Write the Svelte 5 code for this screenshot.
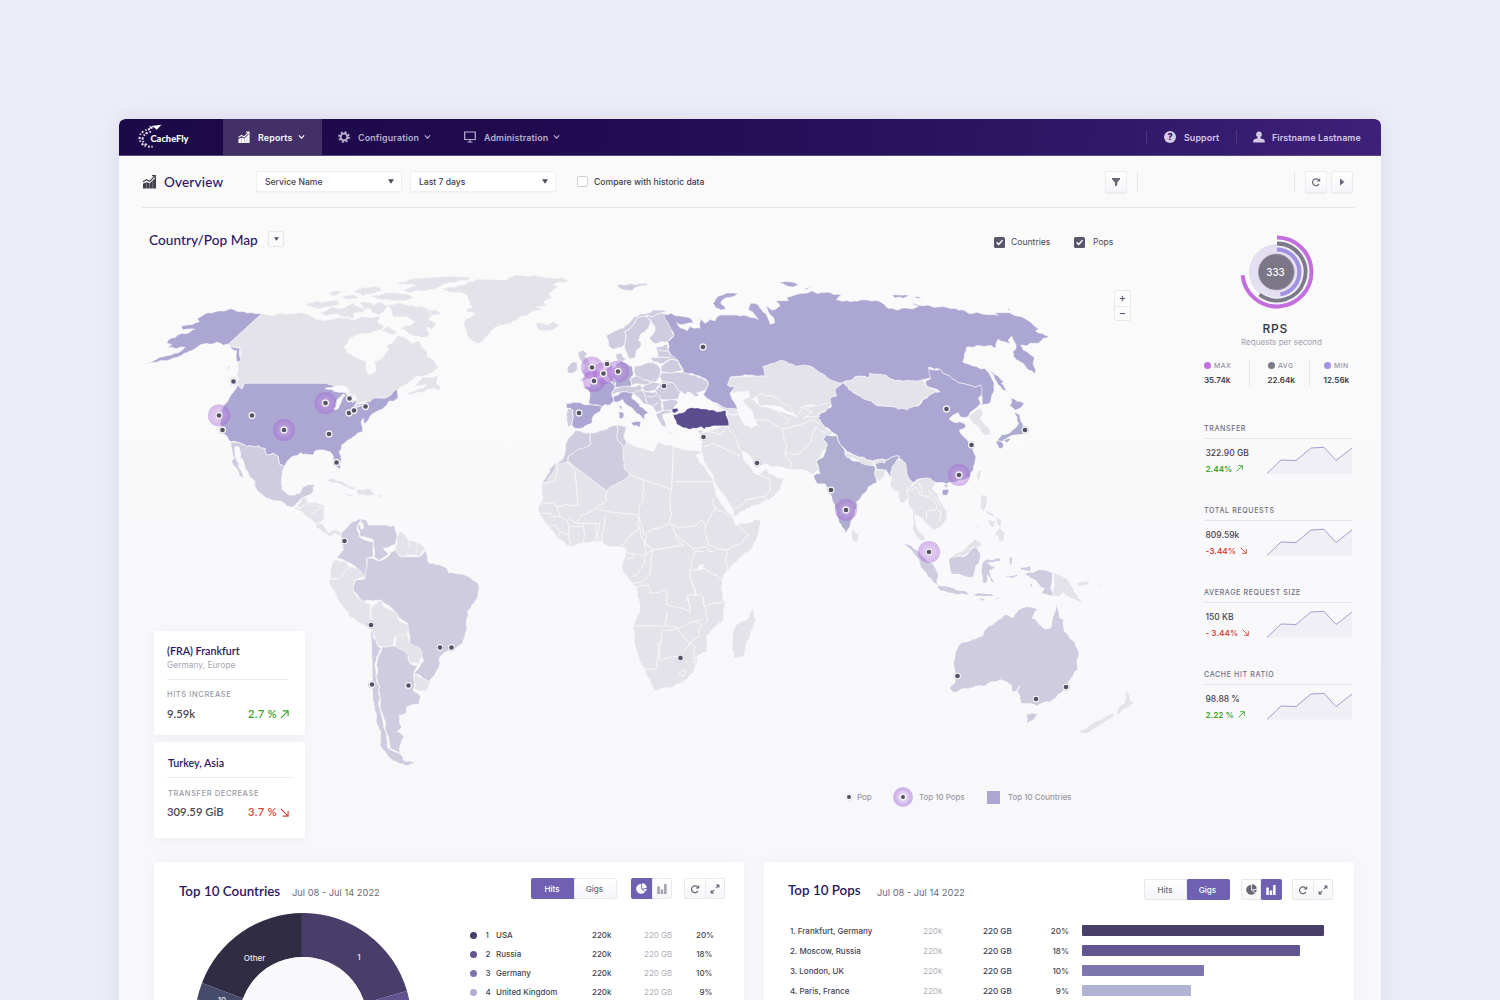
<script>
  // Country outlines, grouped by region. Each region is drawn at three times
  // the map scale and carries the origin of its local coordinate system.
  const regions = [
    { x: 140, y: 260, shapes: [
      ['mid', '364,162 330,158 300,155 282,149 250,153 225,155 190,165 172,175 178,186 150,194 124,200 128,210 165,208 150,216 120,222 90,236 80,248 95,254 83,264 110,266 135,262 120,275 90,286 50,298 12,311 50,307 90,299 130,282 155,272 175,259 200,250 215,252 230,247 250,256 262,252 275,266 290,272 288,290 290,305 304,302 300,265 280,262 266,252'],
      ['grey', '364,162 400,167 415,160 440,163 490,160 520,170 550,182 575,178 600,172 645,180 655,174 690,172 720,168 712,185 735,198 720,210 690,220 660,222 630,235 612,262 622,278 650,295 680,308 678,330 690,345 704,338 706,315 702,303 730,290 745,270 742,255 765,240 770,228 800,235 815,250 835,242 845,262 860,275 862,290 880,300 895,325 860,345 825,352 805,368 780,382 770,392 745,410 700,415 690,425 660,428 640,440 645,420 640,400 625,395 600,385 570,375 552,370 312,370 305,388 292,372 290,345 294,310 303,300 300,262 280,262 266,252'],
      ['mid', '312,370 552,370 580,378 625,395 640,400 650,420 640,440 690,425 700,415 745,410 770,388 774,415 745,425 735,440 700,460 685,480 675,492 670,475 665,480 668,515 640,530 605,555 598,575 605,600 600,628 590,620 580,590 570,575 550,570 525,573 520,585 480,578 455,590 440,605 435,620 420,615 415,590 400,580 380,585 375,565 355,558 320,560 292,547 272,545 262,530 248,520 240,490 245,450 265,420 285,390 292,375 305,388'],
      ['light', '272,547 292,547 320,560 355,558 375,565 380,585 400,580 415,590 420,615 435,620 425,650 428,690 445,705 480,700 490,680 525,672 520,695 500,708 485,715 465,738 455,742 430,728 390,718 350,690 345,665 325,640 312,610 300,590 298,562 285,560 290,600 298,625 310,655 298,648 290,625 274,605 282,595 276,570'],
      ['grey', '470,738 485,715 500,710 505,728 550,735 553,748 545,778 520,775 505,755 480,748'],
      ['line', '505,728 500,745 M520,735 505,755 M520,760 550,745'],
      ['grey', '495,138 530,122 560,124 590,118 600,130 575,138 545,145 520,142'],
      ['grey', '540,158 575,140 600,146 640,130 655,140 680,142 670,155 640,160 645,172 600,166 560,168'],
      ['grey', '565,100 590,92 620,95 580,108'], ['grey', '600,112 640,104 655,114 620,118'],
      ['grey', '640,95 670,82 720,84 725,95 700,100 670,108 655,100'],
      ['grey', '690,110 740,98 800,102 830,112 780,122 720,118'],
      ['grey', '770,70 830,55 920,50 990,52 985,62 930,66 900,80 860,92 800,96 785,88 830,78'],
      ['grey', '660,130 690,126 700,134 725,128 745,138 715,165 700,160 690,146 670,142'],
      ['grey', '740,135 780,128 830,140 870,150 880,165 865,178 890,190 875,210 860,200 868,225 845,232 800,215 780,205 812,196 826,185 800,170 760,170 755,152'],
      ['grey', '720,210 745,198 770,215 760,225'], ['grey', '860,152 885,150 905,158 880,166'],
      ['grey', '790,392 820,380 850,350 880,352 895,345 890,370 903,380 897,392 880,385 850,396 815,405 800,398 850,385 862,375 830,378'],
      ['grey', '555,665 580,655 610,665 645,682 640,690 605,675 570,665'],
      ['grey', '650,690 680,685 705,700 680,708 655,705'], ['grey', '615,703 637,704 632,712'], ['grey', '716,703 731,707 720,713'],
      ['grey', '260,320 271,316 265,335'],
      ['sea', '555,385 590,378 612,378 625,388 628,400 608,396 590,395 575,388'],
      ['sea', '580,448 588,428 610,402 616,406 604,424 594,446'],
      ['sea', '618,402 642,404 650,420 638,428 630,410'],
      ['sea', '630,448 650,438 665,436 640,455']
    ] },
    { x: 440, y: 260, shapes: [
      ['grey', '5,85 60,75 110,58 200,60 215,50 260,48 330,52 385,62 340,75 355,80 325,100 335,115 310,125 320,135 290,140 310,150 270,160 230,180 180,195 155,210 130,240 118,250 95,240 80,225 72,195 80,175 105,160 80,155 80,148 98,142 85,120 80,105 60,97 30,97'],
      ['grey', '285,190 320,194 345,186 358,198 340,210 310,213 292,206'],
      ['light', '530,75 560,74 620,69 624,74 590,80 575,92 550,90'], ['light', '745,70 767,67 755,73'],
      ['light', '500,225 525,212 550,205 570,185 600,162 640,150 672,150 685,160 665,158 640,170 620,166 590,175 575,200 555,215 555,250 545,262 520,268 505,255'],
      ['light', '555,250 555,215 575,200 590,175 620,168 632,185 625,205 600,225 595,240 605,252 590,270 588,290 570,298 560,280 553,262'],
      ['light', '620,168 640,170 665,158 680,165 682,185 702,228 685,245 645,252 628,235 645,210 645,200 632,180'],
      ['light', '527,282 545,278 548,290 560,295 550,303 535,302'],
      ['light', '413,280 430,270 442,280 435,290 450,310 460,330 475,335 470,352 440,358 425,365 420,358 435,350 428,335 435,320 420,300'],
      ['light', '383,320 395,307 412,308 412,330 395,340 382,338'],
      ['mid', '380,430 400,427 440,435 487,440 480,455 462,465 455,490 430,503 405,505 395,495 398,450 380,445'],
      ['light', '382,445 398,450 395,495 383,502 380,480'],
      ['mid', '425,378 450,380 452,365 470,360 487,350 527,375 520,392 515,405 522,425 510,435 495,433 487,440 447,430 450,400 445,390'],
      ['germ', '530,310 545,303 575,318 580,345 570,358 575,378 550,385 525,383 528,365 515,350 518,325'],
      ['light', '487,350 500,320 516,316 516,350 528,365 525,376 500,362'],
      ['light', '515,398 525,386 575,380 600,372 608,385 600,395 570,400 545,395 520,405'],
      ['mid', '522,408 545,396 580,400 575,415 600,440 625,460 615,463 612,480 600,465 565,438 548,418 522,425'],
      ['mid', '573,489 603,487 600,503 580,497'], ['mid', '536,455 551,457 549,475 537,476'], ['mid', '537,438 545,437 543,451'],
      ['light', '583,320 640,308 658,320 660,350 650,366 610,360 585,345'],
      ['light', '570,355 590,348 610,360 645,367 620,375 600,372 575,376'],
      ['light', '606,384 615,375 645,367 662,370 645,392 618,395'],
      ['light', '645,390 665,366 700,370 722,395 715,418 670,420 652,408'],
      ['light', '665,425 710,420 714,426 700,450 670,452'],
      ['light', '580,400 608,392 645,395 665,425 668,452 650,458 638,440 612,432 595,412'],
      ['line', '608,395 622,432 M622,410 650,405 M638,440 655,428'],
      ['light', '647,462 668,452 698,450 692,458 668,464 676,485 680,503 665,498 655,480'],
      ['light', '660,350 665,338 700,338 730,335 765,345 805,365 800,385 770,400 780,405 765,410 745,396 735,405 722,395 700,370 665,366'],
      ['light', '663,318 690,298 715,302 730,330 700,338 663,335'],
      ['light', '648,260 682,252 685,270 715,302 690,298 663,312 640,305 632,292 655,288'],
      ['line', '655,270 685,272 M640,290 690,292'],
      ['dark', '697,455 697,447 710,445 716,452 705,460'],
      ['dark', '700,464 735,455 742,447 765,445 800,448 830,456 858,452 862,475 867,497 820,497 797,502 793,508 785,500 770,505 750,508 725,500 710,492 703,475'],
      ['mid', '819,130 835,108 870,99 907,96 860,113 842,128 857,149 827,144'],
      ['light', '680,517 702,519 690,523'], ['light', '772,514 790,509 780,521']
    ] },
    { x: 740, y: 260, shapes: [
      ['grey', '-75,432 -40,438 0,450 0,420 20,400 60,435 170,470 190,440 278,430 265,445 230,470 245,490 280,520 262,530 258,560 242,590 228,605 240,625 220,645 200,632 150,628 100,620 75,612 60,617 40,600 20,578 5,572 10,598 40,638 60,645 80,625 85,640 130,655 120,690 85,720 20,745 -10,768 -20,768 -25,740 -60,690 -85,640 -110,590 -115,575 -112,540 -108,515 -33,497 -38,452'],
      ['grey', '-38,375 -30,352 75,348 68,320 100,310 130,302 165,318 195,315 260,352 308,368 305,385 285,390 290,408 270,415 278,432 240,435 190,440 170,470 120,440 80,435 60,440 50,410 25,415 22,395 -5,395 -20,400 -38,380'],
      ['mid', '-228,162 -205,160 -180,168 -145,178 -140,188 -165,192 -190,188 -180,203 -158,212 -150,198 -120,205 -118,175 -105,190 -90,178 -75,182 -60,165 -10,165 30,172 55,178 45,165 25,150 32,130 55,135 60,145 80,165 90,192 104,188 100,172 85,155 75,138 95,150 120,138 105,122 145,122 140,112 185,100 215,92 230,100 260,96 305,105 290,120 350,124 395,123 425,128 440,142 475,150 535,140 512,132 570,137 620,142 670,150 700,160 775,168 765,158 810,158 845,170 880,195 897,208 886,212 928,228 910,235 895,250 870,250 860,258 842,255 850,270 882,290 880,305 885,342 860,325 820,290 818,275 828,265 815,228 805,240 815,252 775,238 768,264 740,258 680,262 668,305 700,318 735,325 755,355 762,385 752,425 740,433 725,435 722,375 705,382 685,375 645,360 600,328 565,322 572,355 545,360 500,362 455,358 430,345 390,340 385,355 345,350 308,368 260,352 195,315 165,318 130,302 100,310 68,320 75,348 30,345 -30,352 -38,375 -15,380 -30,400 -15,430 -7,448 -30,445 -60,435 -100,415 -110,405 -100,385 -95,365 -135,345 -170,335 -185,302 -215,270 -217,245 -198,228 -218,185'],
      ['mid', '737,319 766,344 792,365 784,370 804,396 787,389 764,356'],
      ['mid', '117,67 145,65 180,76 160,81'], ['mid', '186,81 217,83 200,89'], ['mid', '456,105 507,108 490,115 464,113'], ['mid', '521,110 552,113 530,115'], ['mid', '802,145 813,148 805,151'],
      ['grey', '308,368 345,350 385,355 390,340 430,345 455,358 500,362 545,360 560,380 600,395 575,402 545,420 535,438 500,450 450,440 415,438 350,405'],
      ['mid', '308,368 350,405 415,438 450,440 500,450 535,438 548,420 575,402 600,395 560,378 557,362 572,355 565,324 600,328 645,360 685,375 705,382 722,375 725,405 715,415 722,432 700,450 685,470 665,472 655,458 640,465 628,478 645,488 660,485 675,492 678,500 658,510 685,545 708,592 700,630 690,650 650,665 620,672 590,668 570,655 545,655 520,668 500,640 497,610 470,588 435,602 380,600 320,575 298,550 292,528 245,490 230,470 275,440 270,415 290,408 285,390'],
      ['mid', '607,690 626,688 621,706 608,706'], ['mid', '611,674 623,674 619,688'],
      ['ind', '260,525 292,528 298,550 315,572 320,590 380,612 400,615 410,640 412,668 385,680 350,725 345,760 330,800 318,822 305,800 285,745 270,700 265,685 255,672 232,672 220,648 240,640 228,605 250,590 262,555 250,540'],
      ['ind', '402,605 435,602 460,590 478,588 470,605 455,630 448,655 435,630 410,628'],
      ['grey', '320,573 345,585 400,603 400,618 380,615 318,590'],
      ['grey', '405,630 440,630 432,650 420,665 405,650'], ['grey', '402,600 435,598 435,610 402,612'],
      ['grey', '450,640 470,600 485,598 497,612 500,640 520,668 500,690 505,715 490,730 480,725 475,695 452,680'],
      ['grey', '685,470 705,455 722,445 728,460 720,475 750,510 750,525 735,527 715,500 700,490'],
      ['mid', '812,415 852,430 845,441 825,451 808,435 815,430'],
      ['germ', '822,455 840,465 848,490 850,522 820,526 800,536 766,546 785,524 810,518 825,505 835,490'],
      ['germ', '767,544 786,545 791,562 780,567'], ['germ', '791,540 812,534 800,548'],
      ['grey', '714,630 723,634 716,661 709,650'],
      ['sea', '-15,420 0,398 25,392 28,410 8,420 22,440 40,465 52,495 35,503 15,495 -2,465'],
      ['line', '50,410 60,400 100,410 125,430 150,440 170,470 M60,440 95,438 150,480 135,492 M15,497 30,480 80,480 130,505 128,520 140,560 135,580 155,608 150,628 M130,505 165,498 190,490 215,480 240,490 M180,440 215,455 190,475 240,470 M135,580 175,582 205,555 218,520 225,500 260,520 M-35,500 -10,540 0,572 M-110,560 -80,550 -40,570 0,585 M-105,515 -60,525 -40,500 M-15,745 20,718 70,710 92,690 90,655 60,648 M70,710 85,725 M-35,460 0,465 M-10,450 5,475']
    ] },
    { x: 300, y: 500, shapes: [
      ['grey', '-20,20 0,25 20,10 75,15 70,60 48,70 0,32'],
      ['line', '15,12 -10,28 M68,22 35,42'],
      ['grey', '48,70 62,70 85,98 110,90 128,98 120,107 105,99 90,110 48,82'],
      ['light', '125,98 150,70 185,55 172,78 178,110 222,125 220,170 200,175 202,205 195,235 180,215 140,185 110,175 130,150 125,115'],
      ['light', '185,58 200,62 205,75 255,75 285,78 290,100 285,135 250,145 265,160 238,182 222,172 222,122 180,110 172,78 182,68'],
      ['grey', '108,178 140,185 148,200 120,235 92,235 92,205'],
      ['grey', '92,237 120,235 148,200 185,215 195,235 165,240 160,275 185,300 212,312 212,385 150,350 115,300 88,250'],
      ['light', '376,150 388,190 410,194 440,205 445,218 490,223 515,238 532,247 538,268 534,288 518,312 502,335 500,365 498,395 488,430 470,442 440,455 418,475 415,505 388,545 342,518 370,485 360,455 328,430 322,370 290,340 242,300 190,305 160,272 168,240 195,235 200,175 240,182 285,150 300,170 360,170'],
      ['grey', '290,110 300,95 325,120 325,165 305,172 285,145'], ['grey', '325,120 352,128 352,168 322,165'], ['grey', '352,128 376,145 360,170 350,166'],
      ['grey', '215,320 240,300 250,320 290,340 298,365 325,375 322,405 290,405 280,435 235,440 212,385'],
      ['grey', '290,405 322,402 330,430 360,445 368,470 355,493 330,490 325,465 285,440'],
      ['grey', '344,520 388,545 382,572 345,568'],
      ['light', '212,387 235,440 245,445 230,480 228,530 238,560 238,620 255,690 265,745 305,765 310,780 345,792 320,797 270,775 240,735 235,680 228,660 218,600 216,480'],
      ['light', '245,440 285,438 325,465 330,490 355,495 342,520 340,570 362,590 358,612 320,620 318,640 298,645 305,680 292,695 312,712 298,745 305,765 270,745 255,680 240,620 240,560 228,530 232,480'],
      ['sea', '181,70 188,68 190,84 183,88']
    ] },
    { x: 520, y: 420, shapes: [
      ['grey', '165,30 210,38 290,15 320,22 312,45 320,65 345,80 400,95 415,65 450,75 520,90 545,100 528,105 560,150 580,185 590,230 600,245 635,285 650,315 720,300 715,340 690,390 640,430 605,480 608,520 615,550 612,600 575,630 558,650 560,695 530,710 525,745 490,785 460,800 405,812 392,790 370,740 350,690 338,620 360,560 350,500 310,455 308,430 320,390 300,380 270,380 245,362 215,365 150,380 110,355 85,320 60,285 55,260 70,230 65,190 90,145 125,120 135,95 140,70'],
      ['light', '165,32 210,38 213,70 175,95 145,110 142,128 110,130 95,165 80,188 65,188 90,145 125,120 135,95 140,65'],
      ['light', '210,38 290,15 295,60 310,85 312,145 330,165 260,213 145,125 145,110 213,70'],
      ['light', '292,15 320,20 312,45 320,65 310,85 292,58'],
      ['line', '65,190 105,185 110,130 M165,155 174,255 108,258 M142,128 165,155 M260,213 260,240 225,265 M330,165 370,178 370,230 355,285 260,275 225,265 M370,178 455,208 460,80 M463,185 580,185 M455,208 450,230 450,310 370,345 355,285 M370,230 M455,312 475,325 530,315 545,300 560,320 M580,235 585,265 630,290 M590,260 555,320 565,375 M640,305 687,345 660,375 620,390 M565,375 620,390 622,450 M450,310 465,340 520,385 565,380 M380,345 375,365 400,390 M465,340 490,375 400,390 370,365 M320,400 378,405 400,390 M355,290 360,325 305,380 M360,325 380,405 M255,285 250,330 245,362 M225,265 185,285 170,310 240,310 M108,258 120,290 90,290 M108,258 100,250 62,245 M60,280 95,280 M120,290 140,300 145,320 190,320 190,310 M190,320 190,375 M225,310 228,362 M237,310 237,362 M145,320 150,378 M85,320 105,315 120,330 110,355 M120,335 150,345 M145,295 170,310'],
      ['line', '320,415 340,415 340,400 M378,405 370,435 355,460 335,470 M400,390 385,470 360,488 335,490 M350,500 385,495 390,520 440,510 440,555 510,578 500,530 530,525 515,490 510,450 525,395 520,385 M525,395 550,395 M510,450 550,445 605,478 M515,490 525,525 550,530 555,560 610,545 M440,575 437,600 435,618 340,618 M435,618 475,625 550,595 M475,628 510,670 538,650 542,615 530,605 M475,625 455,630 425,632 422,668 412,670 410,745 M422,668 420,725 480,705 510,670 M370,742 410,748 M510,672 525,680 525,715 M550,535 565,600 555,610 M500,530 510,570 M562,390 580,395'],
      ['line', '478,760 488,748 498,755 490,768 480,766 478,760 M517,716 525,716 525,728 517,726'],
      ['grey', '700,565 708,600 690,650 670,710 640,712 635,685 648,615 680,600'],
      ['sea', '538,435 550,434 547,447 535,452']
    ] },
    { x: 800, y: 440, islands: true, shapes: [
      ['grey', '322,160 345,130 380,112 405,127 395,145 415,170 440,215 435,245 405,270 385,255 360,230 345,222 350,262 375,300 360,300 338,270 340,220 325,190'],
      ['line', '330,155 350,140 360,165 395,175 410,205 380,215 380,235 M355,125 365,160 M385,150 425,200 M410,205 422,215 418,245'],
      ['grey', '160,268 175,285 172,305 158,300'],
      ['light', '313,312 335,318 375,355 395,370 415,405 412,435 385,410 360,370 335,330'],
      ['light', '413,436 440,440 500,455 505,463 450,458 415,445'],
      ['light', '450,354 490,352 520,324 530,325 540,355 525,380 518,410 455,400'],
      ['grey', '455,352 490,333 525,297 545,315 528,323 516,322 490,348'],
      ['light', '550,365 600,355 602,362 560,369 585,380 568,390 582,425 576,427 562,402 555,430 548,425 545,400'],
      ['light', '627,352 637,355 634,375 629,370'], ['light', '615,406 655,403 650,409 620,410'], ['light', '660,382 690,378 692,392 665,390'],
      ['light', '520,464 575,462 580,468 530,468'], ['light', '583,479 615,463 600,475'], ['light', '535,474 555,478 548,482'], ['light', '690,434 696,432 694,442'],
      ['light', '675,402 700,398 715,390 740,392 757,400 757,468 725,460 735,445 715,430 695,415'],
      ['grey', '761,400 800,415 815,440 845,485 815,475 790,455 775,470 761,468'],
      ['grey', '830,432 860,425 870,415 865,432 845,438'], ['grey', '893,430 903,443 895,438'], ['grey', '860,400 878,415 872,412'],
      ['grey', '545,165 560,170 560,190 550,212 542,205'], ['grey', '555,210 580,222 582,228 560,218'], ['grey', '565,240 585,245 580,262 570,255'], ['grey', '590,232 602,240 600,262'], ['grey', '585,285 600,265 613,280 610,302 595,300 598,288'], ['grey', '545,245 525,272 522,272'],
      ['light', '770,492 778,535 790,540 792,575 815,600 828,622 836,648 832,690 800,740 750,785 710,797 695,790 665,790 660,765 652,755 665,735 650,750 638,755 635,735 618,724 600,718 575,724 550,738 520,742 490,745 460,757 450,745 465,730 468,700 462,665 466,640 475,620 490,607 520,598 545,590 565,560 590,545 615,525 640,535 655,510 680,500 712,508 695,535 735,568 752,565 758,535'],
      ['light', '680,825 712,822 700,840 680,850'],
      ['grey', '980,750 988,780 1003,787 975,805 950,823 955,805 975,790'], ['grey', '938,820 942,828 860,880 838,876 870,855']
    ] }
  ];

  // Breaks long edges into slightly irregular ones, so that coasts and borders
  // look natural. The offset depends only on the two end points, whichever way
  // round they come, so neighbours keep a common border.
  function split(a, b) {
    const dx = b[0] - a[0], dy = b[1] - a[1], len = Math.hypot(dx, dy);
    if (len < 13 || len > 90 || dy === 0) return [b];
    const flip = a[0] > b[0] || (a[0] === b[0] && a[1] > b[1]);
    const [p, q] = flip ? [b, a] : [a, b];
    const seed = Math.sin(p[0] * 12.9 + p[1] * 78.2 + q[0] * 37.7 + q[1] * 4.6) * 43758.5;
    const shift = (seed - Math.floor(seed) - 0.5) * Math.min(len * 0.28, 8);
    const ux = (q[0] - p[0]) / len, uy = (q[1] - p[1]) / len;
    const mid = [(a[0] + b[0]) / 2 - uy * shift, (a[1] + b[1]) / 2 + ux * shift];
    return [...split(a, mid), ...split(mid, b)];
  }
  function outline(kind, text) {
    const closed = kind !== 'line';
    return text.split('M').map((part) => {
      const pts = part.trim().split(/\s+/).map((pair) => pair.split(',').map(Number));
      if (closed) pts.push(pts[0]);
      const out = [pts[0]];
      for (let i = 1; i < pts.length; i++) out.push(...split(pts[i - 1], pts[i]));
      return 'M' + out.map(([x, y]) => `${x.toFixed(1)},${y.toFixed(1)}`).join(' ') + (closed ? 'Z' : '');
    }).join('');
  }

  const pops = [
    [233.5, 381.5], [252, 415.5], [222.5, 430], [349.5, 398.5], [349, 413], [354, 410.5], [365.5, 406.5], [329, 434], [336.5, 462.5],
    [344.5, 541], [371, 625], [372, 684.5], [408.5, 685.5], [440, 647.5], [451.5, 647.5], [680.5, 658], [703, 347], [664, 386],
    [579, 413], [703.5, 437], [757, 463], [946.5, 409], [971.5, 445], [1025, 430], [831, 490], [957.5, 676], [1036, 699],
    [1066, 687], [607, 364]
  ];
  const topPops = [
    [219, 415.5], [325.5, 403], [284, 430], [592, 367.5], [594, 381], [603.5, 373.5], [618, 371.5], [959, 475], [846, 510], [929, 552]
  ];

  const rps = [['MAX', '35.74k', 'max'], ['AVG', '22.64k', 'avg'], ['MIN', '12.56k', 'min']];
  const stats = [
    { name: 'TRANSFER', value: '322.90 GB', delta: '2.44%', up: true },
    { name: 'TOTAL REQUESTS', value: '809.59k', delta: '-3.44%', up: false },
    { name: 'AVERAGE REQUEST SIZE', value: '150 KB', delta: '- 3.44%', up: false },
    { name: 'CACHE HIT RATIO', value: '98.88 %', delta: '2.22 %', up: true }
  ];
  const countries = [['USA', '20%', '#4a3f68'], ['Russia', '18%', '#65548f'], ['Germany', '10%', '#7b74ad'], ['United Kingdom', '9%', '#b0aed3']];
  const popRows = [
    ['Frankfurt, Germany', '20%', 242, '#493f67'], ['Moscow, Russia', '18%', 218, '#635591'],
    ['London, UK', '10%', 122, '#7d76ae'], ['Paris, France', '9%', 109, '#b0b3d4']
  ];
</script>

{#snippet barsIcon()}
  <svg class="bars-icon" viewBox="0 0 14 14"><path d="M.5 8.800 3.700 7.300v6.200h-3.200zM4 7 7.100 8.300v5.200H4zM7.400 8.300l2.900-3v8.200h-2.900zM10.600 4.800l2.900-1.200v9.900h-2.900z" /><path class="trend" d="M.5 6.800 4 4.600l3.200 1.700L12 1.300M9.500.7h3.300V4" /></svg>
{/snippet}
{#snippet chevron()}
  <svg class="chev" viewBox="0 0 8 6"><path d="M1 1.200 4 4.300 7 1.200" /></svg>
{/snippet}
{#snippet caret()}
  <svg class="caret" viewBox="0 0 6 5"><path d="M0 .3h6L3 4.700z" /></svg>
{/snippet}
{#snippet arrow(up)}
  <svg class="arrow" viewBox="0 0 10 10">
    {#if up}<path d="M1 9 9 1M3 1h6v6" />{:else}<path d="M1 1l8 8M9 3v6H3" />{/if}
  </svg>
{/snippet}
{#snippet check()}
  <svg class="tick" viewBox="0 0 11 11"><rect width="11" height="11" rx="1.500" /><path d="M2.700 5.300 4.700 7.500 8.500 3.300" /></svg>
{/snippet}
{#snippet refresh()}
  <svg class="ico" viewBox="0 0 10 10"><path d="M7.900 6.900A3.400 3.400 0 1 1 7.400 2.900" /><path class="solid" d="M5.700 4.500h3.500V1z" /></svg>
{/snippet}
{#snippet tools(active, chart)}
  <div class="tools">
    <div class="seg wide"><span class:on={active === 'Hits'}>Hits</span><span class:on={active === 'Gigs'}>Gigs</span></div>
    <div class="seg charts">
      <span class:on={chart === 'pie'}><svg class="ico pie" viewBox="0 0 10 10"><path class="solid" d="M4.700.6v4.900l3.600 2.700A4.600 4.600 0 1 1 4.700.6z" /><path class="solid" d="M5.500.3a4.600 4.600 0 0 1 4.300 4l-4.300.9z" /><path class="solid" d="M6.200 5.900l3.600-.7a4.200 4.200 0 0 1-1.100 2.600z" /></svg></span>
      <span class:on={chart === 'bar'}><svg class="ico" class:faint={chart !== 'bar'} viewBox="0 0 10 10"><path class="solid" d="M.3 2.500h2.500V10H.3zM3.700 5.500h2.500V10H3.700zM7.100 0h2.500v10H7.100z" /></svg></span>
    </div>
    <div class="seg">
      <span>{@render refresh()}</span>
      <span><svg class="ico" viewBox="0 0 10 10"><path d="M1.800 8.200 4.200 5.800M5.800 4.200l2.400-2.400" /><path class="solid" d="M.6 5.800v3.600h3.600zM9.400 4.200V.6H5.800z" /></svg></span>
    </div>
  </div>
{/snippet}

<div class="window">
  <header>
    <div class="logo">
      <svg viewBox="0 0 54 26">
        <path class="w" d="M13 2 23.500.8 18.500 6 17 4zM11 1.500l4.500 2.600-2.700 1z" />
        <path class="orbit" d="M12 5C5.500 6 1.300 9.500 1.600 14.500 2 19.500 7 24 15.500 22.500" />
        <path class="orbit in" d="M13 7.800C8 8.500 4.400 11.500 4.700 15.500 5 18.500 7 20.200 9 21" />
        <text x="12.500" y="18" textLength="38" lengthAdjust="spacingAndGlyphs">CacheFly</text>
      </svg>
    </div>
    <div class="nav active">{@render barsIcon()}<b>Reports</b>{@render chevron()}</div>
    <div class="nav"><svg class="gear" viewBox="0 0 12 12"><circle class="teeth" cx="6" cy="6" r="4.900" /><circle cx="6" cy="6" r="3.400" /></svg><b>Configuration</b>{@render chevron()}</div>
    <div class="nav admin"><svg class="monitor" viewBox="0 0 12 12"><path d="M.7 1h10.600v7.500H.7zM3.500 11h5M6 8.500V11" /></svg><b>Administration</b>{@render chevron()}</div>
    <div class="account support"><svg viewBox="0 0 12 12"><circle cx="6" cy="6" r="6" /><text x="6" y="9.300">?</text></svg><b>Support</b></div>
    <div class="account"><svg viewBox="0 0 12 12"><path d="M6 .5a2.800 3 0 0 1 1.500 5.600v1.100l3 1c1 .4 1.300 1 1.300 3.300H.2c0-2.300.3-2.900 1.300-3.300l3-1V6.100A2.800 3 0 0 1 6 .5z" /></svg><b>Firstname Lastname</b></div>
  </header>

  <div class="toolbar">
    {@render barsIcon()}
    <h1>Overview</h1>
    <div class="select">Service Name{@render caret()}</div>
    <div class="select">Last 7 days{@render caret()}</div>
    <span class="box"></span><span class="compare">Compare with historic data</span>
    <div class="btn filter"><svg class="ico" viewBox="0 0 10 10"><path class="solid" d="M1 1h8v1.200L6.300 5.500V8L4 9.500v-4L1 2.200z" /></svg></div>
    <i class="sep"></i><i class="sep far"></i>
    <div class="btn">{@render refresh()}</div>
    <div class="btn"><svg class="ico" viewBox="0 0 10 10"><path class="solid" d="M3 1.500 7.500 5 3 8.500z" /></svg></div>
  </div>

  <main>
    <section class="map-area">
      <svg class="map" viewBox="119 208 1060 640">
        <defs>
          <radialGradient id="halo"><stop offset="0" stop-color="#e6b4ec" stop-opacity=".5" /><stop offset=".5" stop-color="#bf84e2" stop-opacity=".44" /><stop offset="1" stop-color="#9c5cd2" stop-opacity=".42" /></radialGradient>
        </defs>
        {#each regions as region}
          <g class:islands={region.islands} transform="translate({region.x} {region.y}) scale(.33333)">
            {#each region.shapes as [kind, points]}
              <path class={kind} d={outline(kind, points)} />
            {/each}
          </g>
        {/each}
        {#each topPops as [x, y]}<circle class="halo" cx={x} cy={y} r="11" />{/each}
        {#each [...pops, ...topPops] as [x, y]}<circle class="pop" cx={x} cy={y} r="3" />{/each}
      </svg>

      <div class="map-head">
        <h2>Country/Pop Map</h2>
        <div class="mini">{@render caret()}</div>
        <div class="checks">{@render check()}<span>Countries</span>{@render check()}<span>Pops</span></div>
      </div>
      <div class="zoomer"><span>+</span><span>−</span></div>

      <div class="tips">
        <div class="tip first">
          <h3>(FRA) Frankfurt</h3>
          <p>Germany, Europe</p>
          <hr />
          <small>HITS INCREASE</small>
          <div class="figures"><strong>9.59k</strong><em class="up">2.7 % {@render arrow(true)}</em></div>
        </div>
        <div class="tip second">
          <h3>Turkey, Asia</h3>
          <hr />
          <small>TRANSFER DECREASE</small>
          <div class="figures"><strong>309.59 GiB</strong><em class="down">3.7 % {@render arrow(false)}</em></div>
        </div>
      </div>

      <div class="legend">
        <svg class="dot" viewBox="0 0 8 8"><circle class="ring" cx="4" cy="4" r="3.600" /><circle cx="4" cy="4" r="2" /></svg><span class="l1">Pop</span>
        <svg class="big" viewBox="0 0 20 20"><circle class="halo" cx="10" cy="10" r="10" /><circle class="glow" cx="10" cy="10" r="6.500" /><circle class="ring" cx="10" cy="10" r="3.400" /><circle cx="10" cy="10" r="2" /></svg><span class="l2">Top 10 Pops</span>
        <i></i><span class="l3">Top 10 Countries</span>
      </div>
    </section>

    <aside>
      <svg class="gauge" viewBox="-37 -37 74 74">
        <circle class="disc" r="28" />
        <path class="g-max" d="M0-34.500A34.500 34.500 0 1 1-34.400 3.300" />
        <path class="gap" d="M0-28.500A28.500 28.500 0 1 1-17.500 22.500" /><path class="g-avg" d="M0-28.500A28.500 28.500 0 1 1-17.500 22.500" />
        <path class="g-min" d="M0-22.600A22.600 22.600 0 0 1 3.400 22.300" />
        <circle class="core" cx="-.7" r="18" />
        <text x="-1.500" y="4" textLength="18.500" lengthAdjust="spacingAndGlyphs">333</text>
      </svg>
      <h4>RPS</h4>
      <p class="per">Requests per second</p>
      <div class="rps">
        {#each rps as [label, value, kind]}<div class="rps-item {kind}"><span><i></i>{label}</span><b>{value}</b></div>{/each}
      </div>
      {#each stats as stat}
        <div class="stat">
          <h5>{stat.name}</h5>
          <div class="stat-body">
            <div><b>{stat.value}</b><em class={stat.up ? 'up' : 'down'}>{stat.delta} {@render arrow(stat.up)}</em></div>
            <svg class="spark" viewBox="0 0 87 29"><path class="area" d="M1 27.500 15 14 30 14.500 45 2 58 1.300 70 14.500 86 2V27.500z" /><path d="M1 27.500 15 14 30 14.500 45 2 58 1.300 70 14.500 86 2" /></svg>
          </div>
        </div>
      {/each}
    </aside>
  </main>

  <div class="cards">
    <section class="card">
      <div class="card-head"><h2>Top 10 Countries</h2><time>Jul 08 - Jul 14 2022</time>{@render tools('Hits', 'pie')}</div>
      <div class="card-body">
        <svg class="donut" viewBox="-108 -108 216 216">
          <path fill="#2f2c44" d="M0-108A108 108 0 0 0-101-38L-60-22.500A64 64 0 0 1 0-64z" />
          <path fill="#493e69" d="M-1.500-108A108 108 0 0 1 104-30L61.500-18A64 64 0 0 0-1.500-64z" />
          <path fill="#62528f" d="M104-30A108 108 0 0 1 60 90L35 53A64 64 0 0 0 61.500-18z" />
          <path fill="#464a6b" d="M-101-38A108 108 0 0 0-106-21.500L-62-12.500A64 64 0 0 1-60-22.500z" />
          <path fill="#555c80" d="M-106-21.500A108 108 0 0 0-104 30L-61.500 18A64 64 0 0 1-62-12.500z" />
          <circle r="64" fill="#f9f9fb" />
          <text x="56" y="-61.500">1</text><text x="-48.500" y="-60.500">Other</text><text x="-81" y="-18.500">10</text>
        </svg>
        <div class="country-list">
          {#each countries as [name, share, color], i}
            <div class="country"><i style:background={color}></i><span>{i + 1}</span><span>{name}</span><span>220k</span><span class="dim">220 GB</span><span class="share">{share}</span></div>
          {/each}
        </div>
      </div>
    </section>
    <section class="card second-card">
      <div class="card-head"><h2>Top 10 Pops</h2><time>Jul 08 - Jul 14 2022</time>{@render tools('Gigs', 'bar')}</div>
      <div class="pop-list">
        {#each popRows as [name, share, width, color], i}
          <div class="pop-row"><span class="place">{i + 1}. {name}</span><span class="dim">220k</span><span>220 GB</span><span class="share">{share}</span><i style:width="{width}px" style:background={color}></i></div>
        {/each}
      </div>
    </section>
  </div>
</div>

<style>
  :global(body) { background: #ecedf7; overflow: hidden; height: 1000px; }
  * { box-sizing: border-box; }
  h1, h2, h3, h4, h5, p { margin: 0; }
  .window { width: 1262px; height: 900px; margin: 119px 0 0 119px; background: linear-gradient(#fafafb, #fafafb 200px, #f8f8fb 640px); border-radius: 6px 6px 0 0; font-family: Inter, "Liberation Sans", sans-serif; font-size: 9px; color: #43424f; box-shadow: 0 0 22px #d9d9ea; display: flex; flex-direction: column; overflow: hidden; }

  header { flex: none; height: 37px; display: flex; align-items: center; background: linear-gradient(97deg, #1c0948, #220b51 40%, #2e1764 75%, #3e2179); color: #b9afd1; border-bottom: 1px solid #5b4a80; border-radius: 6px 6px 0 0; }
  .logo { width: 104px; padding: 0 0 0 19px; height: 26px; }
  .logo svg { width: 54px; height: 26px; display: block; }
  .logo .w { fill: #fff; }
  .orbit { fill: none; stroke: #e9e4f3; stroke-width: 2; stroke-dasharray: 2 1.500 1.300 2.200; }
  .orbit.in { stroke-width: 2; stroke-dasharray: 1.500 1.900 2.200 1.300; }
  .logo text { fill: #fff; font: 900 10px Lato, sans-serif; }
  .nav { display: flex; align-items: center; height: 36px; padding-left: 15px; width: 126px; }
  .nav.active { width: 99px; margin-right: 1px; background: #423066; color: #fff; }
  .nav b, .account b { font-weight: 600; font-size: 8.850px; letter-spacing: .18px; margin-left: 8px; }
  .nav b { margin-right: 5px; }
  .nav.admin { width: 140px; }
  .nav.admin b { letter-spacing: .12px; }
  .bars-icon { width: 13px; height: 13px; fill: currentColor; flex: none; }
  .bars-icon .trend { fill: none; stroke: currentColor; stroke-width: 1.200; }
  .nav .bars-icon { width: 12px; }
  .chev { width: 7px; height: 6px; fill: none; stroke: currentColor; stroke-width: 1.300; }
  .gear, .monitor { width: 12px; height: 12px; fill: none; stroke: currentColor; stroke-width: 1.900; }
  .gear .teeth { stroke-width: 1.800; stroke-dasharray: 2 1.848; }
  .monitor { stroke-width: 1.200; }
  .account { display: flex; align-items: center; height: 14px; border-left: 1px solid #4b377a; color: #d4c9e6; padding-left: 16px; }
  .account svg { width: 12px; height: 12px; fill: #d4c9e6; }
  .account svg text { fill: #321a68; font: 800 9px Inter, sans-serif; text-anchor: middle; }
  .account b { font-size: 8.900px; margin-left: 7px; letter-spacing: .1px; white-space: nowrap; }
  .support { margin-left: auto; width: 90px; padding-left: 17px; }
  .support b { margin-left: 8px; }
  .support + .account { width: 145px; }

  .toolbar { flex: none; height: 52px; margin: 0 26px 0 23px; border-bottom: 1px solid #e5e5ea; display: flex; align-items: center; color: #3f3e4a; font-weight: 500; }
  .toolbar > .bars-icon { width: 15px; height: 14px; }
  h1, h2, h3 { font-family: Lato, "Noto Sans", sans-serif; font-weight: 500; color: #2a1760; }
  h1 { font-size: 13.500px; width: 92px; margin-left: 7px; letter-spacing: .2px; }
  .select { width: 146px; height: 21px; border: 1px solid #efeff3; border-radius: 2px; background: #fff; display: flex; justify-content: space-between; align-items: center; padding: 0 7px 0 8px; margin: 0 8px 0 0; box-shadow: 0 1px 1px #f1f1f4; font-size: 8.600px; }
  .caret { width: 6px; height: 5px; fill: #4d4a5d; }
  .box { width: 11px; height: 11px; border: 1px solid #cfced8; border-radius: 2px; background: #fff; margin-left: 13px; }
  .compare { margin-left: 6px; font-size: 8.600px; }
  .btn { width: 22px; height: 22px; border: 1px solid #ececf1; border-radius: 2px; background: linear-gradient(#fff, #f6f6fa); display: flex; align-items: center; justify-content: center; margin-left: 4px; box-shadow: 0 1px 1px #eeeef2; }
  .btn.filter { margin-left: auto; }
  .ico { width: 10px; height: 10px; fill: none; stroke: #6a6777; stroke-width: 1.200; color: #6a6777; }
  .solid { fill: currentColor; stroke: none; }
  .sep { width: 1px; height: 21px; background: #e6e6eb; margin-left: 10px; }
  .sep.far { margin: 0 6px 0 156px; }
  .toolbar .btn:last-child { margin-right: 2px; }

  main { flex: none; height: 654px; display: flex; position: relative; }
  .map-area { width: 1085px; position: relative; }
  .map { position: absolute; left: 0; top: 0; width: 1060px; height: 640px; }
  .map path { stroke: #f9f9fb; stroke-width: 2.600; stroke-linejoin: round; }
  .map .grey { fill: #e4e3ea; stroke-width: 1.400; }
  .map .light { fill: #cfcce0; stroke-width: 2.200; }
  .map .mid { fill: #aca6d3; stroke-width: 1.800; }
  .map .ind { fill: #afaed0; }
  .map .germ { fill: #adabd0; }
  .map .dark { fill: #5b4d8d; stroke-width: .6; }
  .map .sea { fill: #f9f9fb; }
  .map .islands path { stroke-width: 0; }
  .map .line, .map .islands .line { fill: none; stroke-width: 2.700; }
  .halo { fill: url(#halo); }
  .pop { fill: #555265; stroke: #f6f3fa; stroke-width: 1.300; filter: drop-shadow(0 0 .6px #888); }
  .map-head { position: relative; display: flex; align-items: center; height: 62px; padding-left: 30px; }
  .map-head h2 { font-size: 13.700px; width: 119px; white-space: nowrap; }
  .mini { width: 16px; height: 16px; border: 1px solid #e7e6ee; border-radius: 2px; background: #fbfbfd; display: flex; align-items: center; justify-content: center; }
  .mini .caret { width: 5px; height: 4px; }
  .checks { margin: 6px 91px 0 auto; display: flex; align-items: center; color: #4a4955; font-size: 9px; }
  .tick { width: 11px; height: 11px; fill: #5b5669; }
  .tick path { fill: none; stroke: #fff; stroke-width: 1.500; }
  .checks span { margin-left: 6px; width: 63px; font-size: 8.600px; }
  .checks span:last-child { width: 20px; margin-left: 8px; }
  .zoomer { position: absolute; left: 995px; top: 82px; width: 17px; border: 1px solid #e8e8ee; background: #fcfcfd; border-radius: 2px; }
  .zoomer span { display: block; height: 15px; line-height: 14px; text-align: center; font-size: 11px; font-weight: 500; color: #5a5769; }
  .zoomer span + span { height: 14px; line-height: 13px; border-top: 1px solid #e8e8ee; }

  .tips { position: absolute; left: 35px; top: 423px; width: 151px; }
  .tip { background: #fff; border-radius: 2px; box-shadow: 0 2px 12px #ececf4; padding: 13px 16px 0 13px; }
  .first { height: 104px; }
  .second { height: 96px; margin-top: 7px; padding: 14px 16px 0 14px; }
  h3 { font-size: 10.700px; line-height: 14px; font-weight: 600; }
  .tip p { font-size: 8.400px; line-height: 15px; color: #a9a8b1; }
  hr { border: 0; border-top: 1px solid #ebebef; margin: 6px 1px 9px 0; }
  .second hr { margin: 7px -4px 10px -1px; }
  small { display: block; font-size: 7.500px; line-height: 11px; letter-spacing: .6px; font-weight: 500; color: #9b9aa5; }
  .figures { display: flex; justify-content: space-between; font: 600 11.300px/15px Lato, sans-serif; margin-top: 6px; color: #4b4a55; }
  .figures strong { font-weight: 600; }
  .figures em { letter-spacing: .25px; }
  .figures .arrow { width: 9px; height: 9px; margin-bottom: -.5px; }
  .second .figures { margin: 5px 0 0 -1px; }
  em { font-style: normal; }
  .up { color: #3ea32d; }
  .down { color: #d9483d; }
  .arrow { width: 8px; height: 8px; fill: none; stroke: currentColor; stroke-width: 1.300; }

  .legend { position: absolute; left: 726px; top: 579px; height: 20px; display: flex; align-items: center; color: #9897a2; font-size: 7.900px; font-weight: 500; }
  .legend .dot { width: 8px; height: 8px; margin-right: 4px; }
  .legend circle { fill: #504d60; }
  .legend .ring { fill: #fbf8fc; stroke: #e6e3ed; stroke-width: .8; }
  .legend .halo { fill: #cfb5ea; }
  .legend .glow { fill: #e0c8f0; }
  .big { width: 20px; height: 20px; margin-right: 6px; }
  .legend i { width: 13px; height: 13px; background: #ada6d3; margin-right: 8px; }
  .l1 { width: 36px; }
  .l2 { width: 68px; white-space: nowrap; }
  .l3 { white-space: nowrap; }

  aside { width: 150px; padding-top: 27px; }
  .gauge { display: block; width: 74px; height: 74px; margin-left: 36px; }
  .gauge path { fill: none; stroke-width: 4; }
  .disc { fill: #e4e0f1; }
  .gauge .g-max { stroke: #c26fdd; }
  .gauge .gap { stroke: #f2f0f8; stroke-width: 6.500; }
  .gauge .g-avg { stroke: #7c7989; stroke-width: 3.800; }
  .gauge .g-min { stroke: #a291e0; }
  .core { fill: #7b7787; stroke: #aaa6b8; stroke-width: .6; }
  .gauge text { font: 500 11px Inter, sans-serif; fill: #fff; text-anchor: middle; }
  h4 { font-size: 12px; line-height: 15px; font-weight: 500; letter-spacing: .8px; margin: 12px 0 0 58.500px; color: #33323d; }
  .per { font-size: 8.100px; line-height: 12px; color: #a2a1ac; margin: 0 0 0 37px; white-space: nowrap; }
  .rps { display: flex; margin-top: 10.500px; height: 27px; }
  .rps-item { flex: none; border-left: 1px solid #e6e6eb; padding-left: 18px; width: 60px; }
  .rps-item span { display: flex; align-items: center; font-size: 6.800px; letter-spacing: .5px; color: #92919d; height: 14px; font-weight: 500; }
  .rps-item i { width: 7px; height: 7px; border-radius: 50%; margin-right: 3px; background: #c26fdd; }
  .avg i { background: #7c7989; }
  .min i { background: #a291e0; }
  .rps-item b { display: block; font-size: 8px; line-height: 14px; color: #3c3b47; font-weight: 600; margin-left: -.5px; }
  .rps-item.max { border: 0; padding: 0; width: 45px; }
  .rps-item.max b { margin-left: 0; }
  .rps-item.min { padding-left: 14px; width: 44px; }
  .rps + .stat { margin-top: 38px; }
  .stat { height: 82.300px; }
  h5 { font-size: 7.100px; line-height: 10px; font-weight: 500; letter-spacing: .6px; color: #6f6e7b; height: 15px; border-bottom: 1px solid #e4e4e9; margin-right: 2px; }
  .stat-body { display: flex; justify-content: space-between; padding-top: 6px; }
  .stat-body b, .stat-body em { display: block; font-size: 8.500px; line-height: 16px; font-weight: 500; margin-left: 1.500px; white-space: nowrap; }
  .stat-body em { font-weight: 600; font-size: 8.200px; }
  .stat .arrow { width: 7px; height: 7px; margin-left: 2px; }
  .spark { width: 87px; height: 29px; margin: 1px 1px 0 0; fill: none; stroke: #a49dce; stroke-width: 1; }
  .area { fill: #efeff5; stroke: none; }

  .cards { display: flex; gap: 20px; padding-left: 35px; }
  .card { width: 590px; height: 180px; background: #fff; border-radius: 2px 2px 0 0; box-shadow: 0 0 14px #efeff5; padding: 16px 19px 0 25px; }
  .card-head { display: flex; align-items: center; height: 21px; }
  .card-head h2 { font-size: 13.400px; font-weight: 600; margin-top: 4px; width: 113px; white-space: nowrap; }
  time { font-size: 9.300px; color: #6b6a78; margin-top: 7px; white-space: nowrap; }
  .tools { margin-left: auto; display: flex; gap: 12px; }
  .charts { margin-left: 2px; }
  .seg { display: flex; height: 21px; border: 1px solid #e9e8ef; border-radius: 2px; background: linear-gradient(#fff, #f6f6fa); }
  .seg span { width: 19.500px; display: flex; align-items: center; justify-content: center; font-size: 8.100px; font-weight: 500; color: #6a6777; }
  .seg span + span { border-left: 1px solid #ececf2; }
  .seg.wide span { width: 42px; padding-right: 2px; }
  .seg .on, .seg .on .ico { color: #fff; }
  .seg .on { background: #7060b1; margin: -1px; border-radius: 2px; }
  .seg.wide .on { width: 44px; }
  .seg:not(.wide) .on { width: 21.500px; }
  .pie { width: 11px; height: 11px; }
  .faint { color: #a3a1ae; }
  .card-body { display: flex; }
  .donut { width: 216px; height: 216px; margin: 14px 0 0 15.500px; }
  .donut text { fill: #eceaf4; font: 500 8px Inter, sans-serif; text-anchor: middle; }
  .country-list { margin: 26px 0 0 59.500px; }
  .country { display: grid; grid-template-columns: 15.500px 10.500px 96px 52px 52px 16.500px; height: 19.100px; align-items: center; font-size: 8px; color: #444350; white-space: nowrap; font-weight: 500; }
  .country i { width: 7px; height: 7px; border-radius: 50%; margin-top: 1px; }
  .dim { color: #b0afb9; font-weight: 400; }
  .share { text-align: right; }
  .second-card { padding: 17px 21px 0 24px; }
  .second-card .tools { gap: 10.500px; }
  .second-card .charts { margin: 0; }
  .second-card .card-head h2 { width: 89px; margin-top: 1px; }
  .second-card time { margin-top: 5px; }
  .pop-list { margin: 21px 0 0 2px; }
  .pop-row { display: grid; grid-template-columns: 133px 60px 64px 22px 1fr; align-items: center; height: 20px; font-size: 8.100px; color: #444350; font-weight: 500; white-space: nowrap; }
  .pop-row .place { font-size: 8px; }
  .pop-row i { display: block; height: 11px; margin: -1px 0 0 12.500px; border-radius: 1px; }
</style>
